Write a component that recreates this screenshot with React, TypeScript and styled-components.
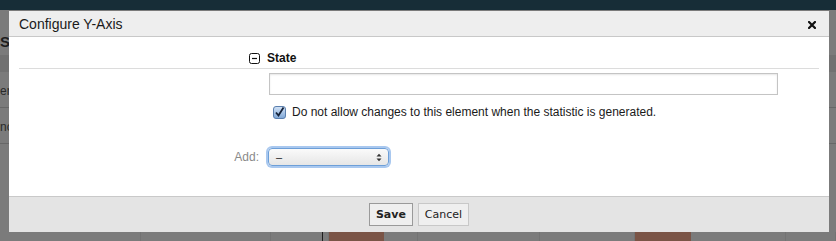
import React from "react";
import styled, { createGlobalStyle } from "styled-components";

const GlobalStyle = createGlobalStyle`
  html, body {
    margin: 0;
    padding: 0;
    background: #7b7b7b;
  }
  body {
    font-family: "Liberation Sans", Arial, sans-serif;
    overflow: hidden;
  }
`;

export default function App() {
  return (
    <>
      <GlobalStyle />
      <Page>
        <TopBar />
        <Behind>
          <PageTitle>Statistics</PageTitle>
          <Band />
          <Row>ername</Row>
          <Row>none</Row>
          <Spacer />
          <Cells>
            <Cell w={141} />
            <Cell w={130} />
            <Cell w={52} dark />
            <Cell w={6} />
            <Cell w={55} brown />
            <Cell w={34} />
            <Cell w={122} />
            <Cell w={95} />
            <Cell w={56} brown />
            <Cell w={95} />
            <Cell w={50} />
          </Cells>
        </Behind>

        <Dialog>
          <Header>
            <Title>Configure Y-Axis</Title>
            <Close aria-label="close">
              <svg width="8" height="8" viewBox="0 0 8 8">
                <path d="M1 1 L7 7 M7 1 L1 7" stroke="#111" strokeWidth="2.2" strokeLinecap="square" />
              </svg>
            </Close>
          </Header>

          <Body>
            <Section>
              <MinusBox width="11" height="11" viewBox="0 0 11 11">
                <rect x="0.5" y="0.5" width="10" height="10" rx="2" fill="#fff" stroke="#111" />
                <path d="M3 5.5 H8" stroke="#111" strokeWidth="1.2" />
              </MinusBox>
              <SectionTitle>State</SectionTitle>
            </Section>
            <Divider />

            <Fields>
              <Label />
              <TextInput />

              <Label />
              <CheckRow>
                <CheckBox width="13" height="13" viewBox="0 0 13 13">
                  <defs>
                    <linearGradient id="cb" x1="0" y1="0" x2="0" y2="1">
                      <stop offset="0" stopColor="#d4e4f7" />
                      <stop offset="1" stopColor="#7ea6d6" />
                    </linearGradient>
                  </defs>
                  <rect x="0.5" y="0.5" width="12" height="12" rx="2.5" fill="url(#cb)" stroke="#5b7fae" />
                  <path d="M3 6.5 L5.5 9.5 L10.5 1.5" fill="none" stroke="#16233a" strokeWidth="1.8" />
                </CheckBox>
                <CheckText>Do not allow changes to this element when the statistic is generated.</CheckText>
              </CheckRow>

              <Label muted>Add:</Label>
              <Select>
                <span>–</span>
                <svg width="6" height="9" viewBox="0 0 6 9">
                  <path d="M0.5 3.5 L3 0.8 L5.5 3.5 Z M0.5 5.5 L3 8.2 L5.5 5.5 Z" fill="#333" />
                </svg>
              </Select>
            </Fields>
          </Body>

          <Footer>
            <Button primary>Save</Button>
            <Button>Cancel</Button>
          </Footer>
        </Dialog>
      </Page>
    </>
  );
}

const Page = styled.div`
  position: relative;
  width: 836px;
  height: 241px;
  overflow: hidden;
  background: #7b7b7b;
`;

const TopBar = styled.div`
  height: 10px;
  background: #172d37;
`;

const Behind = styled.div`
  display: flex;
  flex-direction: column;
  height: 231px;
`;

const PageTitle = styled.div`
  margin: 23px 0 0 0;
  height: 18px;
  font-size: 15px;
  font-weight: bold;
  color: #1d1d1d;
`;

const Band = styled.div`
  margin-top: 4px;
  height: 17px;
  background: #717171;
`;

const Row = styled.div`
  height: 33px;
  border-bottom: 1px solid #676767;
  display: flex;
  align-items: center;
  padding-top: 2px;
  font-size: 12px;
  color: #2a2a2a;
`;

const Spacer = styled.div`
  flex: 1;
`;

const Cells = styled.div`
  display: flex;
  height: 9px;
`;

const Cell = styled.div<{ w: number; brown?: boolean; dark?: boolean }>`
  width: ${(p) => p.w}px;
  background: ${(p) => (p.brown ? "#7a5446" : "#7b7b7b")};
  border-right: 1px solid ${(p) => (p.dark ? "#1e1e1e" : p.brown ? "#7a5446" : "#737373")};
  box-sizing: border-box;
`;

const Dialog = styled.div`
  position: absolute;
  top: 11px;
  left: 9px;
  width: 820px;
  height: 221px;
  background: #fff;
  display: flex;
  flex-direction: column;
`;

const Header = styled.div`
  height: 25px;
  display: flex;
  align-items: center;
  justify-content: space-between;
  padding: 0 13px 0 10px;
  background: #eeeeee;
  border-bottom: 1px solid #c8c8c8;
`;

const Title = styled.div`
  font-size: 14px;
  color: #1a1a1a;
  margin-top: 1px;
`;

const Close = styled.span`
  display: flex;
  margin-top: 2px;
`;

const Body = styled.div`
  flex: 1;
  display: flex;
  flex-direction: column;
`;

const Section = styled.div`
  display: flex;
  align-items: center;
  gap: 7px;
  padding: 11px 0 0 240px;
  height: 20px;
`;

const MinusBox = styled.svg`
  display: block;
`;

const SectionTitle = styled.div`
  font-size: 12px;
  font-weight: bold;
  color: #111;
`;

const Divider = styled.div`
  margin: 0 10px;
  height: 1px;
  background: #dcdcdc;
`;

const Fields = styled.div`
  display: grid;
  grid-template-columns: 250px 509px;
  column-gap: 10px;
  align-items: center;
  margin-top: 4px;
`;

const Label = styled.div<{ muted?: boolean }>`
  text-align: right;
  font-size: 12px;
  color: ${(p) => (p.muted ? "#8a8a8a" : "#333")};
  margin-top: ${(p) => (p.muted ? "29px" : "0")};
`;

const TextInput = styled.div`
  height: 22px;
  box-sizing: border-box;
  border: 1px solid #c4c4c4;
  box-shadow: inset 0 1px 2px #e6e6e6;
  background: #fff;
`;

const CheckRow = styled.div`
  display: flex;
  align-items: center;
  gap: 6px;
  padding-left: 4px;
  margin-top: 10px;
  height: 14px;
`;

const CheckBox = styled.svg`
  display: block;
`;

const CheckText = styled.span`
  font-size: 12px;
  color: #1a1a1a;
`;

const Select = styled.div`
  margin-top: 29px;
  margin-left: -1px;
  width: 121px;
  height: 18px;
  box-sizing: border-box;
  border: 1px solid #6d9fd8;
  border-radius: 4px;
  box-shadow: 0 0 0 2px #a9c8ef;
  background: linear-gradient(#fafafa, #e6e6e6);
  display: flex;
  align-items: center;
  justify-content: space-between;
  padding: 0 6px 0 7px;
  font-size: 11px;
  color: #222;
`;

const Footer = styled.div`
  height: 35px;
  background: #e4e4e4;
  border-top: 1px solid #c9c9c9;
  display: flex;
  align-items: center;
  justify-content: center;
  gap: 5px;
`;

const Button = styled.button<{ primary?: boolean }>`
  height: 23px;
  margin: 0;
  padding: 0 6px;
  box-sizing: border-box;
  background: #efefef;
  border: 1px solid ${(p) => (p.primary ? "#9a9a9a" : "#c8c8c8")};
  border-radius: 0;
  font-family: "DejaVu Sans", Verdana, sans-serif;
  font-size: 11px;
  font-weight: ${(p) => (p.primary ? "bold" : "normal")};
  color: #222;
`;
